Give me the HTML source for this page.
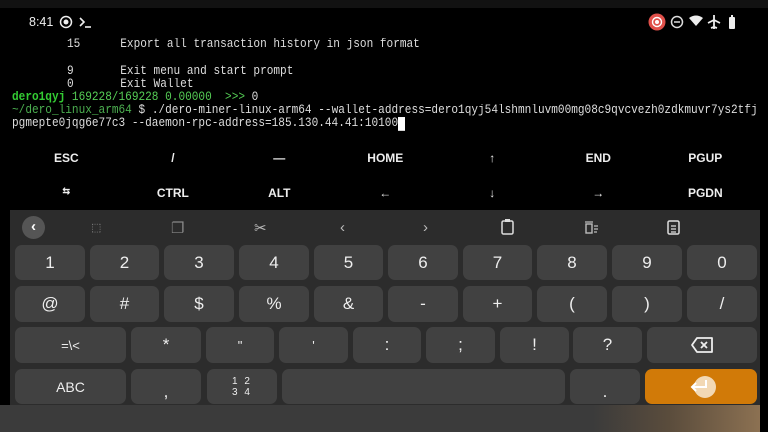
<!DOCTYPE html>
<html><head><meta charset="utf-8"><style>
*{margin:0;padding:0;box-sizing:border-box}
body{width:768px;height:432px;background:#000;position:relative;overflow:hidden;font-family:"Liberation Sans",sans-serif}
.t{position:absolute;font-family:"Liberation Mono",monospace;font-size:11.1px;color:#ddd;white-space:pre;line-height:13px;transform:scaleY(1.15);transform-origin:0 50%}
.ek{position:absolute;width:106.6px;text-align:center;color:#eee;font-size:12px;font-weight:bold}
#kb{position:absolute;left:10px;top:210px;width:750px;height:195px;background:#2c2c2c}
.k{position:absolute;background:#414141;border-radius:7px;color:#eee;font-size:17px;display:flex;align-items:center;justify-content:center}
.tb{position:absolute;top:219px;color:#bbb;font-size:15px}
</style></head><body>
<div style="position:absolute;left:0;top:0;width:768px;height:8px;background:#121212"></div>
<div style="position:absolute;left:29px;top:15px;color:#eee;font-size:12.5px">8:41</div>
<svg style="position:absolute;left:58px;top:14px" width="40" height="16"><circle cx="8" cy="8" r="5.5" fill="none" stroke="#eee" stroke-width="1.5"/><circle cx="8" cy="8" r="2.5" fill="#eee"/><path d="M22 4l4 4-4 4" stroke="#eee" stroke-width="1.6" fill="none"/><path d="M27 13h6" stroke="#eee" stroke-width="1.6"/></svg>
<svg style="position:absolute;left:646px;top:12px" width="100" height="20"><circle cx="11" cy="10" r="8.5" fill="#e0504a"/><circle cx="11" cy="10" r="4.5" fill="none" stroke="#fff" stroke-width="1.4"/><circle cx="11" cy="10" r="2" fill="#fff"/><circle cx="31" cy="10" r="5.5" fill="none" stroke="#ddd" stroke-width="1.5"/><path d="M28 10h6" stroke="#ddd" stroke-width="1.5"/><path d="M43 6q7-5 14 0l-7 8z" fill="#eee"/><path d="M68 3v14M62 11l6-3 6 3M65 16l3-1 3 1" stroke="#eee" stroke-width="1.8" fill="none"/><rect x="83" y="5" width="6" height="12" rx="1" fill="#eee"/><rect x="85" y="3" width="2" height="2" fill="#eee"/></svg>
<div class="t" style="left:67px;top:39px">15      Export all transaction history in json format</div>
<div class="t" style="left:67px;top:66px">9       Exit menu and start prompt</div>
<div class="t" style="left:67px;top:79px">0       Exit Wallet</div>
<div class="t" style="left:12px;top:92px"><b style="color:#3c3">dero1qyj</b><span style="color:#5c5"> 169228/169228 0.00000  &gt;&gt;&gt; </span>0</div>
<div class="t" style="left:12px;top:105px"><span style="color:#4caf50">~/dero_linux_arm64</span> $ ./dero-miner-linux-arm64 --wallet-address=dero1qyj54lshmnluvm00mg08c9qvcvezh0zdkmuvr7ys2tfj</div>
<div class="t" style="left:12px;top:118px">pgmepte0jqg6e77c3 --daemon-rpc-address=185.130.44.41:10100<span style="background:#fff">&nbsp;</span></div>
<div class="ek" style="left:13px;top:151px">ESC</div><div class="ek" style="left:119.6px;top:151px">/</div><div class="ek" style="left:226px;top:151px">—</div><div class="ek" style="left:332px;top:151px">HOME</div><div class="ek" style="left:439px;top:151px">↑</div><div class="ek" style="left:545px;top:151px">END</div><div class="ek" style="left:652px;top:151px">PGUP</div>
<div class="ek" style="left:13px;top:186px;font-size:9px">⇆</div><div class="ek" style="left:119.6px;top:186px">CTRL</div><div class="ek" style="left:226px;top:186px">ALT</div><div class="ek" style="left:332px;top:186px">←</div><div class="ek" style="left:439px;top:186px">↓</div><div class="ek" style="left:545px;top:186px">→</div><div class="ek" style="left:652px;top:186px">PGDN</div>
<div id="kb"></div>
<div style="position:absolute;left:22px;top:216px;width:23px;height:23px;border-radius:50%;background:#555;color:#fff;font-size:15px;font-weight:bold;text-align:center;line-height:22px">‹</div>
<div class="tb" style="left:91px;font-size:11px;top:221px;color:#888">⬚</div>
<div class="tb" style="left:171px;color:#888">❐</div>
<div class="tb" style="left:254px">✂</div>
<div class="tb" style="left:340px">‹</div>
<div class="tb" style="left:423px">›</div>
<svg style="position:absolute;left:500px;top:218px" width="200" height="18"><rect x="2" y="3" width="11" height="13" rx="1.5" fill="none" stroke="#ddd" stroke-width="1.5"/><rect x="5" y="1" width="5" height="3" fill="#ddd"/><rect x="86" y="6" width="6" height="9" fill="none" stroke="#bbb" stroke-width="1.4"/><path d="M85 4h8M94 8h4M94 11h4M94 14h3" stroke="#bbb" stroke-width="1.2"/><rect x="168" y="3" width="11" height="13" rx="1.5" fill="none" stroke="#ddd" stroke-width="1.5"/><path d="M171 8h5M171 11h5M171 14h5" stroke="#ddd" stroke-width="1.2"/></svg>
<div class="k" style="left:15px;top:245px;width:70px;height:35px">1</div><div class="k" style="left:90px;top:245px;width:69px;height:35px">2</div><div class="k" style="left:164px;top:245px;width:70px;height:35px">3</div><div class="k" style="left:239px;top:245px;width:70px;height:35px">4</div><div class="k" style="left:314px;top:245px;width:69px;height:35px">5</div><div class="k" style="left:388px;top:245px;width:70px;height:35px">6</div><div class="k" style="left:463px;top:245px;width:69px;height:35px">7</div><div class="k" style="left:537px;top:245px;width:70px;height:35px">8</div><div class="k" style="left:612px;top:245px;width:70px;height:35px">9</div><div class="k" style="left:687px;top:245px;width:70px;height:35px">0</div>
<div class="k" style="left:15px;top:286px;width:70px;height:36px">@</div><div class="k" style="left:90px;top:286px;width:69px;height:36px">#</div><div class="k" style="left:164px;top:286px;width:70px;height:36px">$</div><div class="k" style="left:239px;top:286px;width:70px;height:36px">%</div><div class="k" style="left:314px;top:286px;width:69px;height:36px">&amp;</div><div class="k" style="left:388px;top:286px;width:70px;height:36px">-</div><div class="k" style="left:463px;top:286px;width:69px;height:36px">+</div><div class="k" style="left:537px;top:286px;width:70px;height:36px">(</div><div class="k" style="left:612px;top:286px;width:70px;height:36px">)</div><div class="k" style="left:687px;top:286px;width:70px;height:36px">/</div>
<div class="k" style="left:15px;top:327px;width:111px;height:36px;font-size:13px">=\&lt;</div><div class="k" style="left:131px;top:327px;width:70px;height:36px">*</div><div class="k" style="left:206px;top:327px;width:68px;height:36px;font-size:13px">"</div><div class="k" style="left:279px;top:327px;width:69px;height:36px;font-size:13px">'</div><div class="k" style="left:353px;top:327px;width:68px;height:36px">:</div><div class="k" style="left:426px;top:327px;width:69px;height:36px">;</div><div class="k" style="left:500px;top:327px;width:69px;height:36px">!</div><div class="k" style="left:573px;top:327px;width:69px;height:36px">?</div>
<div class="k" style="left:647px;top:327px;width:110px;height:36px"><svg width="24" height="18"><path d="M7 2h15v14H7L2 9z" fill="none" stroke="#eee" stroke-width="1.8" stroke-linejoin="round"/><path d="M11 6l6 6M17 6l-6 6" stroke="#eee" stroke-width="1.8"/></svg></div>
<div class="k" style="left:15px;top:369px;width:111px;height:35px;font-size:14px">ABC</div><div class="k" style="left:131px;top:369px;width:70px;height:35px;padding-top:10px">,</div><div class="k" style="left:207px;top:369px;width:70px;height:35px;font-size:10px;line-height:11px;text-align:center;letter-spacing:2px">1 2<br>3 4</div><div class="k" style="left:282px;top:369px;width:283px;height:35px"></div><div class="k" style="left:570px;top:369px;width:70px;height:35px;padding-top:10px">.</div>
<div class="k" style="left:645px;top:369px;width:112px;height:35px;background:#d17a08"><div style="width:22px;height:22px;border-radius:50%;background:#f2d8b4;position:relative;left:4px"></div><svg style="position:absolute;left:43px;top:9px" width="22" height="16"><path d="M18 2v7H5M8 5L4 9l4 4" stroke="#fff" stroke-width="2" fill="none"/></svg></div>
<div style="position:absolute;left:0;top:405px;width:760px;height:27px;background:linear-gradient(90deg,#3b3b3b 0,#3b3b3b 78%,#5a4c3c 88%,#8c7152 100%)"></div>
</body></html>
